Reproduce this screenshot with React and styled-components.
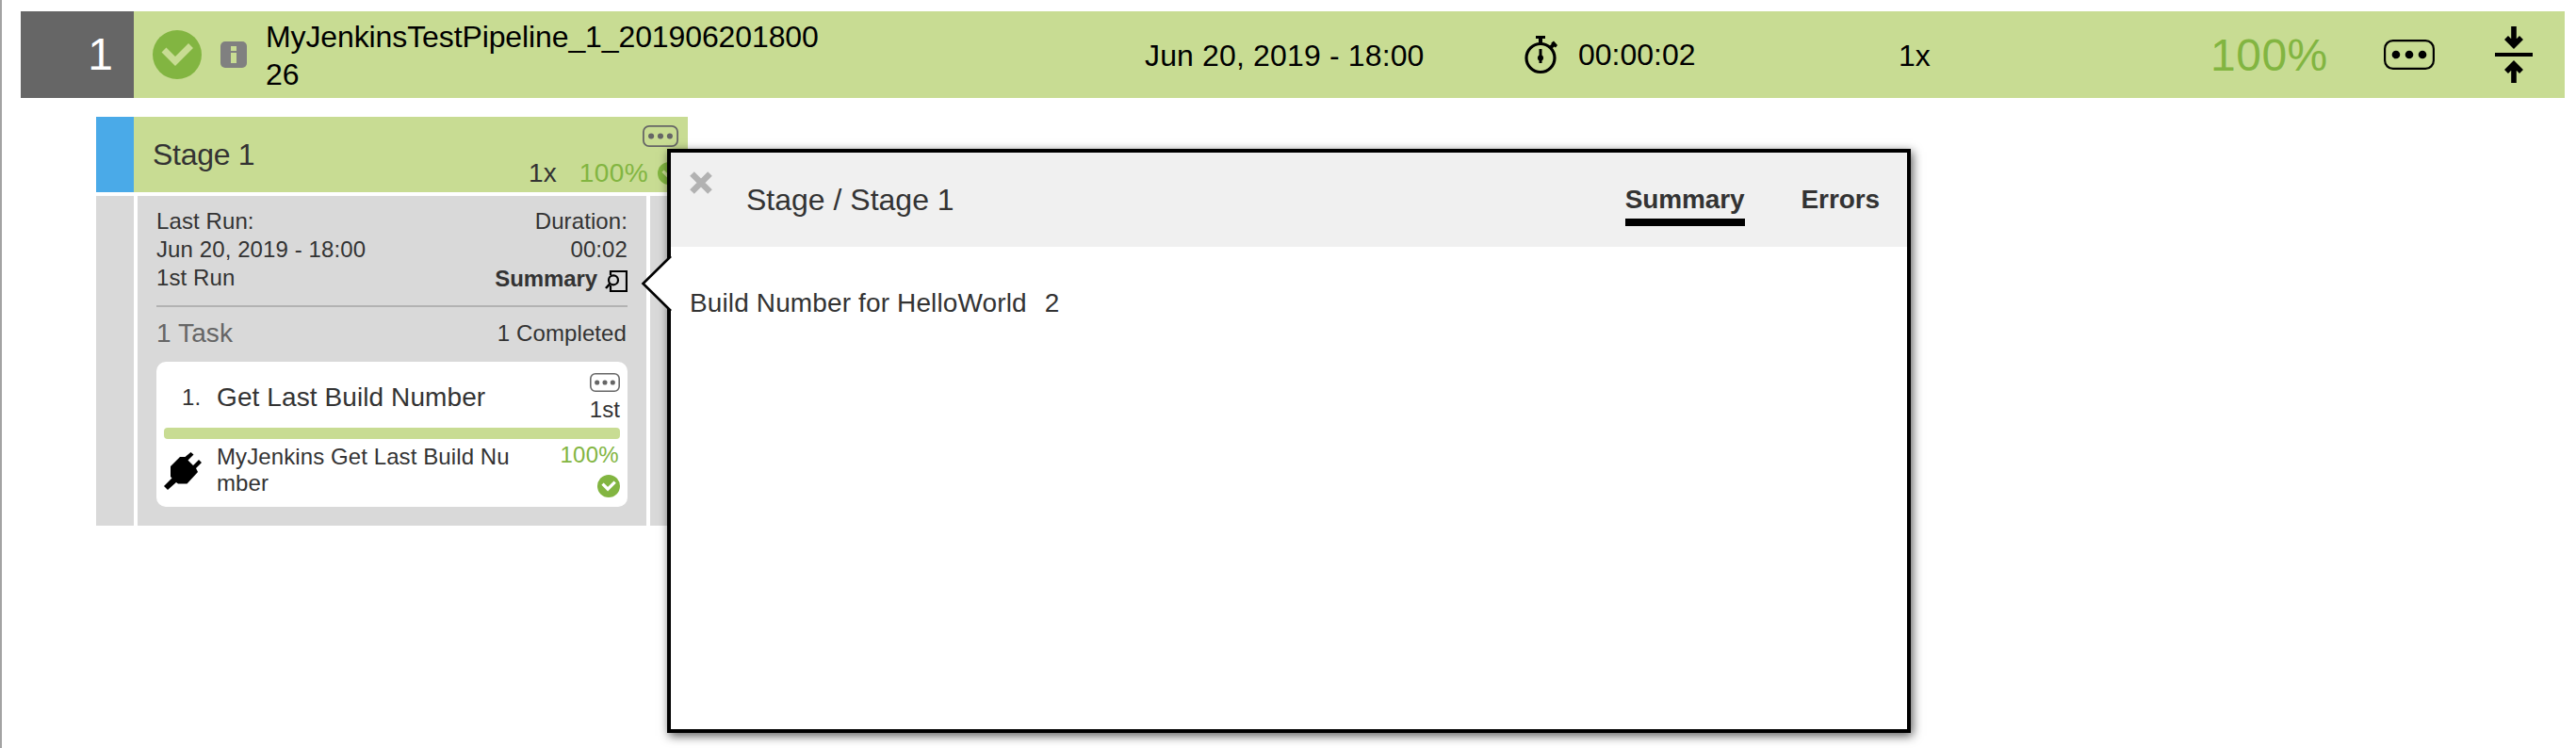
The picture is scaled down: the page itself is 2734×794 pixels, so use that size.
import React from "react";
import styled, { createGlobalStyle } from "styled-components";

const GlobalStyle = createGlobalStyle`
  * { box-sizing: border-box; }
  body {
    margin: 0;
    background: #fff;
    font-family: "Liberation Sans", Arial, sans-serif;
    letter-spacing: 0.006em;
    color: #333;
  }
  svg { display: block; flex: none; }
`;

const Page = styled.div`
  position: relative;
  width: 2734px;
  height: 794px;
  padding: 12px 12px 0 20px;
  border-left: 2px solid #a3a3a3;
  overflow: hidden;
`;

const ReleaseBar = styled.header`
  display: flex;
  height: 92px;
  background: #c8dc93;
  color: #000;
  font-size: 32px;
  line-height: 40px;
`;

const Index = styled.div`
  width: 120px;
  padding: 18px 22px 0 0;
  background: #666;
  color: #fff;
  font-size: 48px;
  line-height: 56px;
  text-align: right;
`;

const Cell = styled.div`
  display: flex;
  flex: none;
  width: ${(p) => p.$w}px;
  padding: ${(p) => p.$top}px 0 0 ${(p) => p.$left || 0}px;
  gap: ${(p) => p.$gap || 0}px;
  letter-spacing: ${(p) => p.$track || 0}px;
`;

const ReleaseName = styled.div`
  width: 600px;
  margin-top: 7px;
  letter-spacing: -0.11px;
  word-break: break-all;
`;

const Percent = styled.span`
  color: #82b541;
  font-size: ${(p) => p.$size}px;
  line-height: ${(p) => p.$line}px;
  letter-spacing: ${(p) => p.$track || 0}px;
`;

const Stage = styled.section`
  width: 628px;
  margin: 20px 0 0 80px;
`;

const StageHead = styled.div`
  display: flex;
  height: 80px;
  border-left: 40px solid #4aaae8;
  background: #c8dc93;
`;

const StageTitle = styled.h2`
  flex: 1;
  margin: 0;
  padding: 20px 0 0 20px;
  font-size: 32px;
  line-height: 40px;
  font-weight: 400;
  letter-spacing: -0.3px;
`;

const StageStatus = styled.div`
  display: flex;
  flex-direction: column;
  align-items: flex-end;
  padding: 9px 8px 0 0;
`;

const StageMenu = styled.div`
  margin-right: 2px;
`;

const StageCounts = styled.div`
  display: flex;
  padding-top: 12px;
  font-size: 28px;
  line-height: 32px;
`;

const Runs = styled.span`
  margin-right: 24px;
`;

const CountCheck = styled.div`
  margin: 4px 0 0 10px;
`;

const StageBody = styled.div`
  display: grid;
  grid-template-columns: 40px 540px 40px;
  gap: 4px;
  height: 350px;
  margin-top: 4px;
`;

const Rail = styled.div`
  background: #d9d9d9;
`;

const StageContent = styled.div`
  padding: 12px 20px 0;
  background: #d9d9d9;
`;

const RunInfo = styled.div`
  display: flex;
  justify-content: space-between;
  height: 106px;
  border-bottom: 2px solid #b2b2b2;
  font-size: 24px;
  line-height: 30px;
`;

const InfoColumn = styled.div`
  text-align: ${(p) => p.$align || "left"};
`;

const SummaryLink = styled.div`
  display: flex;
  justify-content: flex-end;
  gap: 8px;
  padding-top: 1px;
  font-weight: 700;
  letter-spacing: -0.1px;
`;

const SummaryIcon = styled.div`
  padding-top: 5px;
`;

const TaskCount = styled.div`
  display: flex;
  justify-content: space-between;
  height: 58px;
  padding-top: 12px;
  color: #666;
  font-size: 28px;
  line-height: 32px;
`;

const Completed = styled.span`
  padding-right: 1px;
  color: #333;
  font-size: 24px;
  line-height: 31px;
`;

const TaskCard = styled.article`
  height: 154px;
  padding: 12px 8px 0;
  border-radius: 10px;
  background: #fff;
`;

const TaskRow = styled.div`
  display: flex;
  height: 58px;
`;

const TaskNumber = styled.span`
  width: 56px;
  padding: 10px 0 0 19px;
  font-size: 24px;
  line-height: 32px;
`;

const TaskTitle = styled.h3`
  flex: 1;
  margin: 0;
  padding-top: 10px;
  font-size: 28px;
  line-height: 32px;
  font-weight: 400;
`;

const TaskAside = styled.div`
  display: flex;
  flex-direction: column;
  align-items: flex-end;
  font-size: 24px;
  line-height: 32px;
`;

const Attempt = styled.span`
  margin-top: 3px;
`;

const ProgressTrack = styled.div`
  height: 12px;
  border-radius: 4px;
  background: #c8dc93;
`;

const PlugCell = styled.div`
  width: 56px;
  padding-top: 14px;
`;

const TaskDescription = styled.p`
  flex: none;
  width: 316px;
  margin: 0;
  padding-top: 5px;
  font-size: 24px;
  line-height: 28px;
  word-break: break-all;
`;

const TaskResult = styled.div`
  display: flex;
  flex: 1;
  flex-direction: column;
  align-items: flex-end;
  gap: 7px;
  padding-top: 3px;
`;

const TaskPercent = styled(Percent)`
  margin-right: 1px;
`;

const Popup = styled.aside`
  position: absolute;
  left: 706px;
  top: 158px;
  width: 1320px;
  height: 620px;
  border: 4px solid #000;
  background: #fff;
  box-shadow: 2px 3px 10px rgba(0, 0, 0, 0.65);
`;

const Pointer = styled.svg`
  position: absolute;
  left: -32px;
  top: 108px;
`;

const PopupHead = styled.div`
  display: flex;
  height: 100px;
  padding: 20px 29px 0 20px;
  background: #f0f0f0;
`;

const PopupTitle = styled.h2`
  flex: 1;
  margin: 0;
  padding: 10px 0 0 36px;
  font-size: 32px;
  line-height: 40px;
  font-weight: 400;
  letter-spacing: 0;
`;

const Tab = styled.span`
  height: 58px;
  margin-left: 60px;
  padding-top: 14px;
  border-bottom: 8px solid ${(p) => (p.$active ? "#000" : "transparent")};
  font-size: 28px;
  line-height: 32px;
  font-weight: 700;
  letter-spacing: -0.1px;
`;

const PopupBody = styled.div`
  display: flex;
  gap: 19px;
  padding: 44px 20px;
  font-size: 28px;
  line-height: 32px;
  letter-spacing: 0.13px;
`;

const CheckIcon = ({ size, tick }) => (
  <svg width={size} height={size} viewBox="0 0 52 52">
    <circle cx="26" cy="26" r="26" fill="#82b541" />
    <path d="M12 21 L24 33 L40.5 16.5" fill="none" stroke={tick} strokeWidth="7" />
  </svg>
);

const InfoIcon = () => (
  <svg width="28" height="28" viewBox="0 0 28 28">
    <rect width="28" height="28" rx="5" fill="#808080" />
    <path d="M11 5h6v5h-6zM11 12h6v11h-6z" fill="#c8dc93" />
  </svg>
);

const MenuIcon = ({ width, height, color = "#666", stroke = 1.8 }) => (
  <svg width={width} height={height} viewBox={`0 0 ${width} ${height}`}>
    <rect
      x={stroke / 2}
      y={stroke / 2}
      width={width - stroke}
      height={height - stroke}
      rx={width * 0.16}
      fill="none"
      stroke={color}
      strokeWidth={stroke}
    />
    {[-0.26, 0, 0.26].map((o) => (
      <circle key={o} cx={width * (0.5 + o)} cy={height / 2} r={width * 0.08} fill={color} />
    ))}
  </svg>
);

const StopwatchIcon = () => (
  <svg width="36" height="42" viewBox="0 0 36 42">
    <circle cx="17" cy="23.5" r="15" fill="none" stroke="#000" strokeWidth="3.2" />
    <path d="M12 0h10v3h-3v6h-4V3h-3zM28.5 7.5l2.5-2 4 4.5-2 2.5-1.5-1-3 3-3-3 3-2.5z" fill="#000" />
    <path d="M15.5 14h3v6.5a3.6 3.6 0 0 1 0 6V29h-3v-2.5a3.6 3.6 0 0 1 0-6z" fill="#000" />
  </svg>
);

const CollapseIcon = () => (
  <svg width="40" height="60" viewBox="0 0 40 60">
    <path d="M0 28h40v4H0z" />
    <path d="M20 0v20M12 12l8 8 8-8M20 60V40M12 48l8-8 8 8" fill="none" stroke="#000" strokeWidth="5.6" />
  </svg>
);

const PopoutIcon = () => (
  <svg width="24" height="24" viewBox="0 0 24 24" fill="none" stroke="#000" strokeWidth="2.2">
    <path d="M6 6V2H23V23H6V17" />
    <circle cx="9" cy="11.3" r="5" />
    <path d="M5.5 15L1 20" strokeWidth="2.6" />
  </svg>
);

const PlugIcon = () => (
  <svg width="40" height="40" viewBox="0 0 40 40">
    <path d="M7 15L17 5H22.500L28.500 0L31.500 2.500L25.500 8.500L31 14L37 8L40 11L34 17L36 21L24.500 33.500H15L13 32L4 40L0 36L8.500 27.500L7 26z" />
  </svg>
);

const CloseIcon = () => (
  <svg width="24" height="24" viewBox="0 0 24 24">
    <path d="M2.5 2.5l19 19M21.5 2.5l-19 19" stroke="#b2b2b2" strokeWidth="6.5" />
  </svg>
);

export default function App() {
  return (
    <Page>
      <GlobalStyle />
      <ReleaseBar>
        <Index>1</Index>
        <Cell $w={72} $left={20} $top={20}>
          <CheckIcon size={52} tick="#c8dc93" />
        </Cell>
        <Cell $w={68} $left={20} $top={32}>
          <InfoIcon />
        </Cell>
        <Cell $w={933} $top={0}>
          <ReleaseName>MyJenkinsTestPipeline_1_20190620180026</ReleaseName>
        </Cell>
        <Cell $w={403} $top={27} $track={0.15}>Jun 20, 2019 - 18:00</Cell>
        <Cell $w={397} $top={26} $gap={21}>
          <StopwatchIcon />
          <span>00:00:02</span>
        </Cell>
        <Cell $w={331} $top={27}>1x</Cell>
        <Cell $w={184} $top={19}>
          <Percent $size={48} $line={56} $track={0.5}>100%</Percent>
        </Cell>
        <Cell $w={118} $top={30}>
          <MenuIcon width={54} height={32} color="#000" stroke={2.2} />
        </Cell>
        <Cell $w={40} $top={16}>
          <CollapseIcon />
        </Cell>
      </ReleaseBar>

      <Stage>
        <StageHead>
          <StageTitle>Stage 1</StageTitle>
          <StageStatus>
            <StageMenu>
              <MenuIcon width={38} height={23} />
            </StageMenu>
            <StageCounts>
              <Runs>1x</Runs>
              <Percent $size={28} $line={32} $track={0.4}>100%</Percent>
              <CountCheck>
                <CheckIcon size={24} tick="#c8dc93" />
              </CountCheck>
            </StageCounts>
          </StageStatus>
        </StageHead>
        <StageBody>
          <Rail />
          <StageContent>
            <RunInfo>
              <InfoColumn>
                <div>Last Run:</div>
                <div>Jun 20, 2019 - 18:00</div>
                <div>1st Run</div>
              </InfoColumn>
              <InfoColumn $align="right">
                <div>Duration:</div>
                <div>00:02</div>
                <SummaryLink>
                  Summary
                  <SummaryIcon>
                    <PopoutIcon />
                  </SummaryIcon>
                </SummaryLink>
              </InfoColumn>
            </RunInfo>
            <TaskCount>
              <span>1 Task</span>
              <Completed>1 Completed</Completed>
            </TaskCount>
            <TaskCard>
              <TaskRow>
                <TaskNumber>1.</TaskNumber>
                <TaskTitle>Get Last Build Number</TaskTitle>
                <TaskAside>
                  <MenuIcon width={32} height={20} stroke={1.6} />
                  <Attempt>1st</Attempt>
                </TaskAside>
              </TaskRow>
              <ProgressTrack />
              <TaskRow>
                <PlugCell>
                  <PlugIcon />
                </PlugCell>
                <TaskDescription>MyJenkins Get Last Build Number</TaskDescription>
                <TaskResult>
                  <TaskPercent $size={24} $line={28} $track={0.3}>100%</TaskPercent>
                  <CheckIcon size={24} tick="#fff" />
                </TaskResult>
              </TaskRow>
            </TaskCard>
          </StageContent>
          <Rail />
        </StageBody>
      </Stage>

      <Popup>
        <Pointer width="34" height="62" viewBox="0 0 34 62">
          <path d="M34 2L32 2L2.5 31L32 60L34 60z" fill="#fff" />
          <path d="M32 2L2.5 31L32 60" fill="none" stroke="#000" strokeWidth="2.6" />
        </Pointer>
        <PopupHead>
          <CloseIcon />
          <PopupTitle>Stage / Stage 1</PopupTitle>
          <Tab $active>Summary</Tab>
          <Tab>Errors</Tab>
        </PopupHead>
        <PopupBody>
          <span>Build Number for HelloWorld</span>
          <span>2</span>
        </PopupBody>
      </Popup>
    </Page>
  );
}
